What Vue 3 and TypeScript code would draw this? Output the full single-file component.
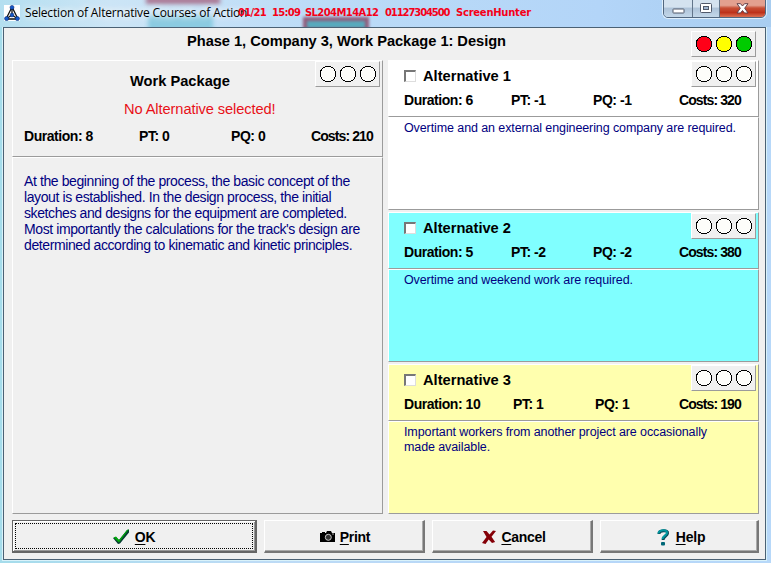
<script setup lang="ts">
interface Stats { duration: string; pt: string; pq: string; costs: string }
interface Alternative extends Stats { name: string; tone: string; lines: string[] }

const lampsOn: string[] = ['#ff0018', '#ffff00', '#00cb00']
const lampsOff: string[] = ['#fdfdfa', '#fdfdfa', '#fdfdfa']
const stamp: string[] = ['01/21', '15:09', 'SL204M14A12', '01127304500', 'ScreenHunter']

const description: string[] = [
  'At the beginning of the process, the basic concept of the',
  'layout is established. In the design process, the initial',
  'sketches and designs for the equipment are completed.',
  "Most importantly the calculations for the track's design are",
  'determined according to kinematic and kinetic principles.',
]

const alternatives: Alternative[] = [
  { name: 'Alternative 1', tone: 'white', duration: '6', pt: '-1', pq: '-1', costs: '320', lines: ['Overtime and an external engineering company are required.'] },
  { name: 'Alternative 2', tone: 'cyan', duration: '5', pt: '-2', pq: '-2', costs: '380', lines: ['Overtime and weekend work are required.'] },
  { name: 'Alternative 3', tone: 'yellow', duration: '10', pt: '1', pq: '1', costs: '190', lines: ['Important workers from another project are occasionally', 'made available.'] },
]
</script>

<template>
  <div class="window">
    <header class="titlebar">
      <i class="smear a"></i><i class="smear b"></i><i class="smear c"></i>
      <svg class="appicon" width="16" height="16" viewBox="0 0 16 16">
        <rect width="16" height="16" fill="#fff" />
        <path d="M8 2 2 14h12zM8 2v8M2 14l6-4 6 4" fill="none" stroke="#111" stroke-width="1.3" />
        <g fill="#1458c8" stroke="#06256b" stroke-width=".5"><circle cx="8" cy="2.4" r="2" /><circle cx="2.6" cy="13.6" r="2.1" /><circle cx="13.4" cy="13.6" r="2.1" /><circle cx="8" cy="10" r="1.9" /></g>
      </svg>
      <span class="title">Selection of Alternative Courses of Action</span>
      <div class="stamp"><span v-for="(part, i) in stamp" :key="part" :class="'p' + i">{{ part }}</span></div>
      <div class="controls">
        <span class="ctl min"><svg width="13" height="6" viewBox="0 0 13 6"><rect x="1" y="1" width="11" height="4" rx=".6" fill="#fff" stroke="#50596a" /></svg></span>
        <span class="ctl max"><svg width="12" height="11" viewBox="0 0 12 11"><rect x=".5" y=".5" width="11" height="9" rx="1" fill="#fff" stroke="#50596a" /><rect x="3.5" y="3.5" width="5" height="3" fill="#9fb5cf" stroke="#50596a" /></svg></span>
        <span class="ctl close"><svg width="13" height="11" viewBox="0 0 13 11"><path d="M1 .7h3.5l2 2.3 2-2.3H12L8.7 5.2 12 10H8.5l-2-2.5-2 2.5H1l3.3-4.8z" fill="#fff" stroke="#62404b" /></svg></span>
      </div>
    </header>

    <main class="client">
      <div class="heading">
        <h1>Phase 1, Company 3, Work Package 1: Design</h1>
        <div class="lamps"><svg v-for="(c, i) in lampsOn" :key="i" width="18" height="18" viewBox="0 0 18 18" shape-rendering="crispEdges"><circle cx="9" cy="9" r="7.8" :fill="c" stroke="#000" /></svg></div>
      </div>

      <div class="columns">
        <section class="column left">
          <div class="panel summary">
            <div class="lamps"><svg v-for="(c, i) in lampsOff" :key="i" width="18" height="18" viewBox="0 0 18 18" shape-rendering="crispEdges"><circle cx="9" cy="9" r="7.8" :fill="c" stroke="#000" /></svg></div>
            <h2>Work Package</h2>
            <p class="warning">No Alternative selected!</p>
            <div class="stats"><span>Duration: 8</span><span>PT: 0</span><span>PQ: 0</span><span class="costs">Costs: 210</span></div>
          </div>
          <div class="panel description"><p v-for="line in description" :key="line">{{ line }}</p></div>
        </section>

        <section class="column right">
          <article v-for="alt in alternatives" :key="alt.name" class="alternative" :class="alt.tone">
            <div class="panel althead">
              <div class="lamps"><svg v-for="(c, i) in lampsOff" :key="i" width="18" height="18" viewBox="0 0 18 18" shape-rendering="crispEdges"><circle cx="9" cy="9" r="7.8" :fill="c" stroke="#000" /></svg></div>
              <label class="choice"><span class="box"></span><span>{{ alt.name }}</span></label>
              <div class="stats"><span>Duration: {{ alt.duration }}</span><span>PT: {{ alt.pt }}</span><span>PQ: {{ alt.pq }}</span><span class="costs">Costs: {{ alt.costs }}</span></div>
            </div>
            <div class="panel note"><p v-for="line in alt.lines" :key="line">{{ line }}</p></div>
          </article>
        </section>
      </div>

      <footer class="buttons">
        <button class="ok"><span class="focus">
          <svg width="17" height="16" viewBox="0 0 17 16"><path d="M0 9l3-1 3 3L14 1l2-.5v3L7 14.5 5 15z" fill="#063f32" /><path d="M.5 8.500 3 7.500l3 3.500L14 1l2-.9L6 13.500z" fill="#00a80c" /></svg>
          <span><u>O</u>K</span></span></button>
        <button class="print">
          <svg width="16" height="12" viewBox="0 0 16 12"><path d="M0 2h2V1h3v1h1l1-2h4l1 2h3v9H0z" fill="#000" /><circle cx="8.3" cy="6.3" r="3" fill="#333" stroke="#c8c8c8" /><path d="M12 3h2" stroke="#aaa" /></svg>
          <span><u>P</u>rint</span></button>
        <button class="cancel">
          <svg width="14" height="14" viewBox="0 0 14 14"><path d="M1 1h3.500l3 3.500 3.500-4L14 1 9.500 6.800l3.600 5.200-3.100 1L6.700 9.500 3.500 14 0 13 4.500 7z" fill="#850008" /></svg>
          <span><u>C</u>ancel</span></button>
        <button class="help">
          <svg width="13" height="17" viewBox="0 0 13 17"><path d="M2 5c0-4 9.5-4.500 8.500-.5C10 7 6 7.500 6 11" fill="none" stroke="#074858" stroke-width="3" /><path d="M1.500 4.500c0-4 9.500-4.500 8.500-.5C9.500 6.500 5.500 7 5.500 10" fill="none" stroke="#00979f" stroke-width="2" /><rect x="4" y="13" width="4" height="3.500" rx="1" fill="#006777" /></svg>
          <span><u>H</u>elp</span></button>
      </footer>
    </main>
  </div>
</template>

<style>
body { margin: 0; overflow: hidden; }
</style>

<style scoped>
* { box-sizing: border-box; }
h1, h2, p { margin: 0; font: inherit; }
.window { position: relative; width: 771px; height: 563px; padding: 0 5px 3px 3px; font-family: "Liberation Sans", Arial, sans-serif; color: #000; white-space: nowrap;
  background: linear-gradient(90deg, #a5dceb 0, #bddbf5 250px, #b6d6f8 550px, #b7d8f9 100%); }
.titlebar { position: relative; display: flex; height: 27px; margin: 0 -5px 0 -3px; padding-left: 4px; overflow: hidden; background: linear-gradient(90deg, #b4dff0, #cce5f6 110px, #bbdbf7 330px, #b3d5f8 600px, #a8cdf0); }
.smear { position: absolute; filter: blur(2px); }
.smear.a { left: 146px; top: -3px; width: 74px; height: 7px; background: #aa7793; }
.smear.b { left: 148px; top: 15px; width: 65px; height: 16px; background: #8bcbe1; }
.smear.c { left: 303px; top: 17px; width: 66px; height: 15px; border: 4px solid #925a7a; background: #57aabd; filter: blur(1.5px); }
.appicon { position: relative; margin-top: 5px; }
.title { position: relative; margin: 4px 0 0 5px; font: 12px/18px "Open Sans", "Noto Sans", sans-serif; letter-spacing: -.18px; text-shadow: 0 0 6px #fff, 0 0 8px #fff; }
.stamp { position: absolute; left: 238px; top: 5px; display: flex; gap: 7px; color: #f50018; font: bold 10px/16px "DejaVu Sans", sans-serif; }
.stamp span { width: 27px; letter-spacing: -.7px; }
.stamp .p1 { width: 26px; }
.stamp .p2 { width: 73px; letter-spacing: -.6px; }
.stamp .p3 { width: 64px; letter-spacing: -1.100px; }
.stamp .p4 { width: 75px; letter-spacing: -.25px; }
.controls { display: flex; position: absolute; left: 663px; top: -2px; height: 20px; width: 103px; border: 1px solid #52677f; border-radius: 0 0 5px 5px; overflow: hidden; box-shadow: 0 0 0 1px #e0effb; }
.ctl { display: flex; align-items: center; justify-content: center; background: linear-gradient(#d4e2ef 45%, #adc2d8 50%, #c4d8e9); border-right: 1px solid #62758a; }
.min { width: 29px; padding-top: 5px; }
.max { width: 27px; }
.close { flex: 1; border-right: 0; background: linear-gradient(#e3a08f 35%, #c84f35 50%, #bd311a 75%, #dc7052); }
.client { display: flex; flex-direction: column; height: 533px; padding: 0 6px 6px 8px; background: #f0f0f0; border: 1px solid #4b6174; box-shadow: 0 0 0 1px #d9f2fa; }
.heading { display: flex; justify-content: flex-end; flex: none; height: 32px; padding: 3px 3px 0 0; }
h1 { flex: 1; padding-left: 175px; margin-top: 1px; font: bold 14.670px/18px "Liberation Sans", sans-serif; letter-spacing: -.04px; }
.lamps { display: flex; gap: 2px; width: 65px; height: 26px; padding: 3px 3px 0 3px; background: #f0f0f0; border: solid; border-width: 1px; border-color: #fff #9b9b9b #9b9b9b #fff; }
.lamps svg { flex: none; }
.columns { display: flex; gap: 5px; height: 454px; }
.left { width: 371px; }
.right { display: flex; flex-direction: column; gap: 2px; width: 371px; }
.panel { border: 1px solid; border-color: #fff #9b9b9b #9b9b9b #fff; }
.panel .lamps { float: right; margin: 0 2px 0 0; }
.summary { height: 97px; }
.summary h2 { padding: 11px 0 0 117px; font: bold 14.670px/18px "Liberation Sans", sans-serif; }
.warning { padding: 10px 0 0 111px; color: #e81018; font-size: 14.670px; line-height: 18px; letter-spacing: -.1px; }
.stats { display: grid; font: bold 14px/16px "Liberation Sans", sans-serif; letter-spacing: -.45px; }
.costs { letter-spacing: -.9px; }
.summary .stats { grid-template-columns: 115px 92px 80px 70px; margin: 10px 0 0 11px; }
.description { height: 357px; padding: 15px 11px; color: #000080; font-size: 14px; line-height: 16px; letter-spacing: -.4px; }
.alternative { height: 150px; }
.white .panel { background: #fff; }
.cyan .panel { background: #80ffff; }
.yellow .panel { background: #ffffae; }
.panel .lamps, .white .lamps { background: #f0f0f0; }
.althead { height: 57px; }
.choice { display: flex; gap: 7px; padding: 6px 0 0 15px; font: bold 14.670px/18px "Liberation Sans", sans-serif; }
.box { width: 12px; height: 12px; margin-top: 3px; background: #fff; border: solid; border-width: 2px 1px 1px 2px; border-color: #777 #ddd #ddd #777; }
.althead .stats { grid-template-columns: 107px 82px 86px 70px; margin: 7px 0 0 15px; }
.yellow .stats { grid-template-columns: 109px 82px 84px 70px; }
.note { height: 93px; padding: 3px 15px; color: #000080; font-size: 12.500px; line-height: 15px; letter-spacing: -.1px; }
.buttons { display: grid; grid-template-columns: 245px 161px 161px 159px; gap: 7px; height: 33px; margin-top: 6px; }
button { display: flex; align-items: center; justify-content: center; gap: 5px; padding: 2px 0 0; font: bold 14px/18px "Liberation Sans", sans-serif; letter-spacing: -.3px; color: #000; background: #f0f0f0; border: solid; border-width: 1px 2px 2px 1px; border-color: #fff #777 #777 #fff; box-shadow: inset -1px -1px #aaa; }
.print { gap: 4px; padding-left: 2px; }
.cancel { padding-left: 4px; }
.help { gap: 6px; padding-left: 4px; letter-spacing: -.2px; }
u { text-decoration-thickness: 1px; text-underline-offset: 2px; }
.ok { padding: 2px; border: 1px solid #666; border-right-width: 2px; border-bottom-width: 2px; box-shadow: inset 1px 1px #fff, inset -1px -1px #999; }
.focus { display: flex; align-items: center; justify-content: center; width: 238px; height: 26px; padding-top: 1px; gap: 5px; border: 1px dotted #000; }
</style>
